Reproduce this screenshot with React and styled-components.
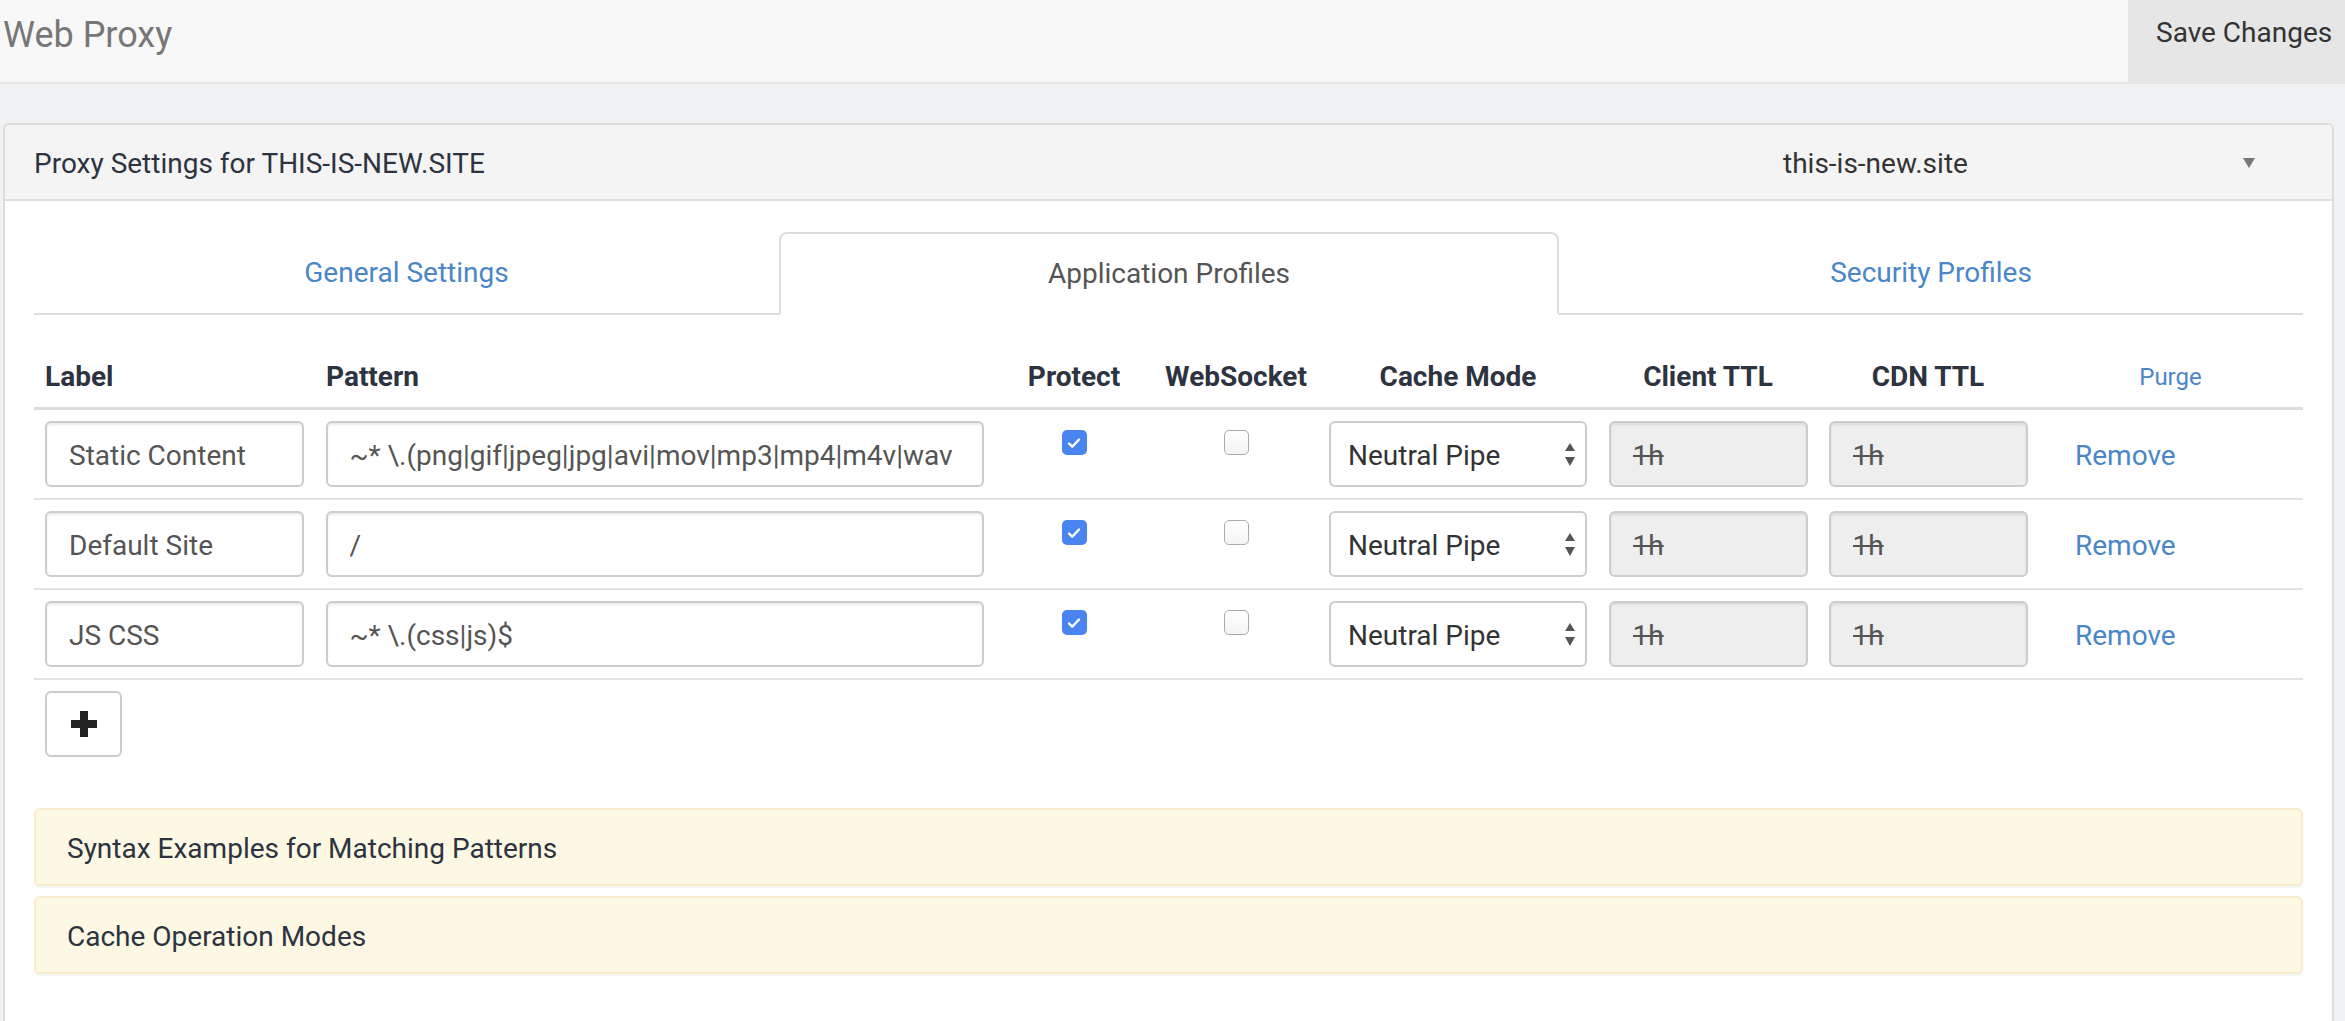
import styled, { createGlobalStyle } from "styled-components";

const GlobalStyle = createGlobalStyle`
  body {
    margin: 0;
    background: #f1f2f4;
    font-family: Roboto, "Noto Sans", sans-serif;
  }
  * {
    box-sizing: border-box;
  }
`;

const COLUMNS = "281px 679px 160px 164px 280px 220px 220px 1fr";
const LINK = "#4a86c8";
const DARK = "#2d3340";

const TopBar = styled.header`
  display: flex;
  justify-content: space-between;
  height: 84px;
  background: #f8f8f8;
  border-bottom: 2px solid #e6e6e6;
`;

const PageTitle = styled.h1`
  margin: 0;
  padding: 17px 0 0 3px;
  font-size: 36px;
  line-height: 36px;
  font-weight: 400;
  color: #777;
`;

const SaveButton = styled.button`
  width: 217px;
  border: none;
  background: #e6e6e6;
  padding: 19px 0 0 28px;
  text-align: left;
  display: flex;
  align-items: flex-start;
  font: 400 28px/28px Roboto, sans-serif;
  color: #333;
`;

const Main = styled.main`
  padding: 39px 11px 0 3px;
`;

const Panel = styled.section`
  border: 2px solid #ddd;
  border-radius: 6px;
  background: #fff;
  overflow: hidden;
`;

const PanelHeading = styled.div`
  display: flex;
  align-items: center;
  height: 76px;
  padding: 2px 29px 0;
  background: #f4f4f4;
  border-bottom: 2px solid #ddd;
`;

const PanelTitle = styled.h2`
  margin: 0;
  font-size: 28px;
  font-weight: 400;
  color: ${DARK};
`;

const SiteSelect = styled.div`
  margin-left: auto;
  margin-right: 48px;
  width: 472px;
  display: flex;
  justify-content: space-between;
  align-items: center;
  font-size: 28px;
  color: #333;
`;

const PanelBody = styled.div`
  padding: 31px 29px 60px;
`;

const TabBar = styled.nav`
  display: grid;
  grid-template-columns: 745px 780px 1fr;
`;

const Tab = styled.a`
  height: 83px;
  display: flex;
  align-items: center;
  justify-content: center;
  font-size: 28px;
  color: ${(p) => (p.$active ? "#555" : LINK)};
  border-bottom: 2px solid #ddd;
  ${(p) =>
    p.$active &&
    `
    border: 2px solid #ddd;
    border-bottom-color: transparent;
    border-radius: 8px 8px 0 0;
    background: #fff;
  `}
`;

const HeadRow = styled.div`
  display: grid;
  grid-template-columns: ${COLUMNS};
  border-bottom: 3px solid #ddd;
`;

const HeadCell = styled.div`
  padding: 42px 11px 10px;
  line-height: 40px;
  font-size: ${(p) => (p.$link ? "24px" : "28px")};
  font-weight: ${(p) => (p.$link ? 400 : 700)};
  color: ${(p) => (p.$link ? LINK : DARK)};
  text-align: ${(p) => p.$align || "center"};
`;

const Row = styled.div`
  display: grid;
  grid-template-columns: ${COLUMNS};
  height: 90px;
  border-bottom: 2px solid #e2e2e2;
`;

const Cell = styled.div`
  padding: 11px 0;
  display: flex;
  justify-content: ${(p) => p.$justify || "center"};
  align-items: flex-start;
  padding-left: ${(p) => p.$indent || 0}px;
`;

const Field = styled.input`
  width: ${(p) => p.$width}px;
  height: 66px;
  border: 2px solid #ccc;
  border-radius: 6px;
  padding: 3px 22px 0;
  font: 400 28px Roboto, sans-serif;
  color: #555;
  background: ${(p) => (p.$struck ? "#eee" : "#fff")};
  text-decoration: ${(p) => (p.$struck ? "line-through" : "none")};
  box-shadow: inset 0 2px 2px rgba(0, 0, 0, 0.075);
  outline: none;
`;

const Check = styled.span`
  margin-top: 9px;
  width: 25px;
  height: 25px;
  border-radius: 5px;
  display: flex;
  align-items: center;
  justify-content: center;
  background: ${(p) => (p.$checked ? "#4a84f1" : "linear-gradient(#fff, #f4f4f4)")};
  border: ${(p) => (p.$checked ? "none" : "1.5px solid #aaa")};
`;

const SelectBox = styled.div`
  width: 258px;
  height: 66px;
  border: 2px solid #ccc;
  border-radius: 6px;
  padding: 3px 9px 0 17px;
  display: flex;
  align-items: center;
  justify-content: space-between;
  font-size: 28px;
  color: #333;
  background: #fff;
`;

const RemoveLink = styled.a`
  padding-top: 4px;
  line-height: 62px;
  font-size: 28px;
  color: ${LINK};
`;

const AddButton = styled.button`
  margin: 11px 0 0 11px;
  width: 77px;
  height: 66px;
  border: 2px solid #ccc;
  border-radius: 6px;
  background: #fff;
  display: flex;
  align-items: center;
  justify-content: center;
  padding: 0;
`;

const Notes = styled.div`
  margin-top: 51px;
  display: flex;
  flex-direction: column;
  gap: 10px;
`;

const NotePanel = styled.div`
  height: 78px;
  border: 2px solid #faebcc;
  border-radius: 6px;
  background: #fcf8e3;
  padding: 3px 31px 0;
  display: flex;
  align-items: center;
  font-size: 28px;
  color: ${DARK};
  box-shadow: 0 2px 2px rgba(0, 0, 0, 0.05);
`;

const profiles = [
  { label: "Static Content", pattern: "~* \\.(png|gif|jpeg|jpg|avi|mov|mp3|mp4|m4v|wav" },
  { label: "Default Site", pattern: "/" },
  { label: "JS CSS", pattern: "~* \\.(css|js)$" },
];

const Checkbox = ({ checked }) => (
  <Check $checked={checked}>
    {checked && (
      <svg width="16" height="16" viewBox="0 0 16 16">
        <path d="M3 8.5l3.2 3.2L13 4.5" fill="none" stroke="#fff" strokeWidth="2.4" strokeLinecap="round" strokeLinejoin="round" />
      </svg>
    )}
  </Check>
);

const App = () => (
  <>
    <GlobalStyle />
    <TopBar>
      <PageTitle>Web Proxy</PageTitle>
      <SaveButton>Save Changes</SaveButton>
    </TopBar>
    <Main>
      <Panel>
        <PanelHeading>
          <PanelTitle>Proxy Settings for THIS-IS-NEW.SITE</PanelTitle>
          <SiteSelect>
            <span>this-is-new.site</span>
            <svg width="12" height="10" viewBox="0 0 12 10">
              <path d="M0 0h12L6 10z" fill="#777" />
            </svg>
          </SiteSelect>
        </PanelHeading>
        <PanelBody>
          <TabBar>
            <Tab>General Settings</Tab>
            <Tab $active>Application Profiles</Tab>
            <Tab>Security Profiles</Tab>
          </TabBar>

          <HeadRow>
            <HeadCell $align="left">Label</HeadCell>
            <HeadCell $align="left">Pattern</HeadCell>
            <HeadCell>Protect</HeadCell>
            <HeadCell>WebSocket</HeadCell>
            <HeadCell>Cache Mode</HeadCell>
            <HeadCell>Client TTL</HeadCell>
            <HeadCell>CDN TTL</HeadCell>
            <HeadCell $link>Purge</HeadCell>
          </HeadRow>

          {profiles.map((p) => (
            <Row key={p.label}>
              <Cell>
                <Field $width={259} defaultValue={p.label} readOnly />
              </Cell>
              <Cell>
                <Field $width={658} defaultValue={p.pattern} readOnly />
              </Cell>
              <Cell>
                <Checkbox checked />
              </Cell>
              <Cell>
                <Checkbox />
              </Cell>
              <Cell>
                <SelectBox>
                  <span>Neutral Pipe</span>
                  <svg width="12" height="26" viewBox="0 0 12 26">
                    <path d="M6 0l5 8H1z M1 14h10l-5 9z" fill="#555" />
                  </svg>
                </SelectBox>
              </Cell>
              <Cell>
                <Field $width={199} $struck defaultValue="1h" readOnly />
              </Cell>
              <Cell>
                <Field $width={199} $struck defaultValue="1h" readOnly />
              </Cell>
              <Cell $justify="flex-start" $indent={37}>
                <RemoveLink>Remove</RemoveLink>
              </Cell>
            </Row>
          ))}

          <AddButton>
            <svg width="26" height="26" viewBox="0 0 26 26">
              <path d="M9 0h8v9h9v8h-9v9H9v-9H0V9h9z" fill="#222" />
            </svg>
          </AddButton>

          <Notes>
            <NotePanel>Syntax Examples for Matching Patterns</NotePanel>
            <NotePanel>Cache Operation Modes</NotePanel>
          </Notes>
        </PanelBody>
      </Panel>
    </Main>
  </>
);

export default App;
